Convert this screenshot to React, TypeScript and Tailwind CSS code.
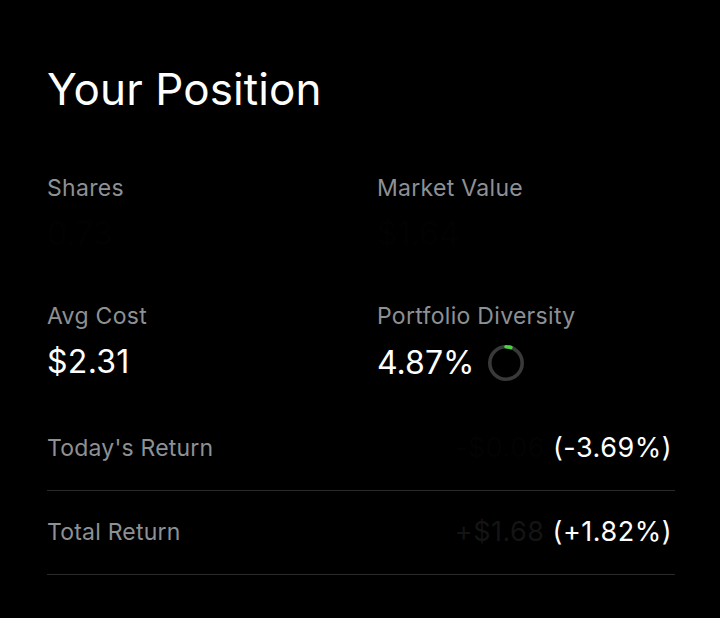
import React from "react";

function Ring() {
  const r = 16.2;
  const c = 2 * Math.PI * r;
  const pct = 0.0487;
  return (
    <svg width="38" height="38" viewBox="0 0 38 38" className="shrink-0">
      <circle cx="19" cy="19" r={r} fill="none" stroke="#38393b" strokeWidth="3.6" />
      <circle
        cx="19"
        cy="19"
        r={r}
        fill="none"
        stroke="#48d43f"
        strokeWidth="3.6"
        strokeLinecap="round"
        strokeDasharray={`${c * pct} ${c}`}
        transform="rotate(-90 19 19)"
      />
    </svg>
  );
}

export default function App() {
  return (
    <div
      className="w-[720px] h-[618px] bg-black overflow-hidden pl-[47px] pr-[45px] pt-[63px]"
      style={{ fontFamily: "Inter, 'Noto Sans', sans-serif" }}
    >
      <h1 className="text-[44px] leading-[52px] text-white font-normal tracking-[0.1px]">Your Position</h1>

      <div className="grid grid-cols-2 gap-x-8 mt-[59px]">
        <div className="flex flex-col">
          <div className="text-[23px] leading-[28px] text-[#8d9095] tracking-[0.3px]">Shares</div>
          <div className="mt-[14px] text-[32px] leading-[36px] text-[#020202]">0.73</div>
        </div>
        <div className="flex flex-col">
          <div className="text-[23px] leading-[28px] text-[#8d9095] tracking-[0.3px]">Market Value</div>
          <div className="mt-[14px] text-[32px] leading-[36px] text-[#020202]">$1.64</div>
        </div>
        <div className="flex flex-col mt-[50px]">
          <div className="text-[23px] leading-[28px] text-[#8d9095] tracking-[0.3px]">Avg Cost</div>
          <div className="mt-[14px] text-[32px] leading-[36px] text-white tracking-[0.3px]">$2.31</div>
        </div>
        <div className="flex flex-col mt-[50px]">
          <div className="text-[23px] leading-[28px] text-[#8d9095] tracking-[0.3px]">Portfolio Diversity</div>
          <div className="mt-[14px] flex items-center gap-[13px]">
            <span className="text-[32px] leading-[36px] text-white">4.87%</span>
            <Ring />
          </div>
        </div>
      </div>

      <div className="mt-[25px] flex flex-col">
        <div className="h-[84px] flex items-center justify-between border-b border-[#2a2a2c]">
          <span className="text-[23px] text-[#8d9095] tracking-[0.2px]">Today's Return</span>
          <span className="text-[27px] pr-[3px] tracking-[0.5px]">
            <span className="text-[#030303]">-$0.06</span>
            <span className="text-white"> (-3.69%)</span>
          </span>
        </div>
        <div className="h-[84px] flex items-center justify-between border-b border-[#2a2a2c]">
          <span className="text-[23px] text-[#8d9095] tracking-[0.2px]">Total Return</span>
          <span className="text-[27px] pr-[3px] tracking-[0.5px]">
            <span className="text-[#141414]">+$1.68</span>
            <span className="text-white"> (+1.82%)</span>
          </span>
        </div>
      </div>
    </div>
  );
}
